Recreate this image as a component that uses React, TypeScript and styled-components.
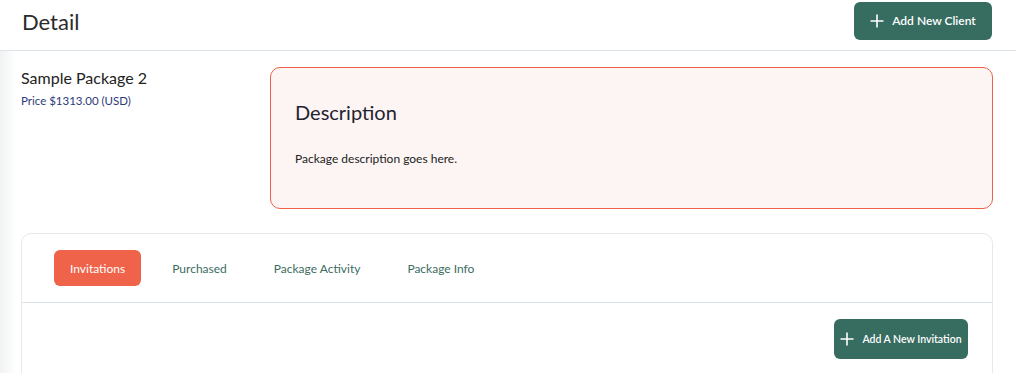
import React from "react";
import styled, {createGlobalStyle} from "styled-components";

const GlobalStyle = createGlobalStyle`
  html, body {
    margin: 0;
    padding: 0;
    background: #fff;
    font-family: Lato, "Noto Sans", "Liberation Sans", sans-serif;
  }
  * { box-sizing: border-box; }
`

const Page = styled.div`
  width: 1016px;
  height: 373px;
  overflow: hidden;
  display: flex;
  flex-direction: column;
`

const Header = styled.div`
  height: 51px;
  flex-shrink: 0;
  display: flex;
  align-items: flex-start;
  justify-content: space-between;
  padding: 2px 24px 0 22px;
  border-bottom: 1px solid #dde3ea;
`

const Title = styled.h1`
  margin: 6px 0 0;
  font-size: 22px;
  font-weight: 400;
  color: #2b2b2b;
`

const GreenButton = styled.button<{ w: number; h: number; fs: number }>`
  width: ${p => p.w}px;
  height: ${p => p.h}px;
  display: flex;
  align-items: center;
  justify-content: center;
  gap: 8px;
  border: none;
  border-radius: 6px;
  background: #376c61;
  color: #fff;
  font-family: inherit;
  font-size: ${p => p.fs}px;
  font-weight: 600;
  cursor: pointer;
  padding: 0 0 1px;
`

const Body = styled.div`
  flex: 1;
  padding: 16px 23px 0 21px;
  background: linear-gradient(to right, #f1f2f3 0px, #fff 16px);
`

const Top = styled.div`
  display: flex;
`

const PackageInfo = styled.div`
  width: 249px;
  flex-shrink: 0;
`

const PackageName = styled.div`
  font-size: 16px;
  color: #222;
  line-height: 22px;
`

const Price = styled.div`
  margin-top: 5px;
  font-size: 11.5px;
  color: #2d3a78;
`

const DescCard = styled.div`
  flex: 1;
  height: 142px;
  border: 1px solid #ef6149;
  border-radius: 10px;
  background: #fdf5f4;
  padding: 32px 24px 0;
`

const DescTitle = styled.h2`
  margin: 0;
  font-size: 20px;
  font-weight: 400;
  color: #1f2330;
`

const DescText = styled.p`
  margin: 27px 0 0;
  font-size: 12px;
  color: #222;
`

const TabsCard = styled.div`
  margin-top: 24px;
  border: 1px solid #e6e8ea;
  border-radius: 10px;
  height: 200px;
`

const TabRow = styled.div`
  height: 69px;
  display: flex;
  align-items: flex-start;
  gap: 15px;
  padding: 16px 0 0 32px;
  border-bottom: 1px solid #dde3ea;
`

const Tab = styled.div<{ active?: boolean }>`
  height: 36px;
  display: flex;
  align-items: center;
  padding: 0 16px;
  border-radius: 6px;
  font-size: 12px;
  background: ${p => (p.active ? "#ef634a" : "transparent")};
  color: ${p => (p.active ? "#fff" : "#3c6c62")};
`

const Actions = styled.div`
  display: flex;
  justify-content: flex-end;
  padding: 16px 24px 0 0;
`

const Plus = () => (
  <svg width="14" height="14" viewBox="0 0 14 14">
    <path d="M7 0.5v13M0.5 7h13" stroke="#fff" strokeWidth="1.6"/>
  </svg>
)

const tabs = ["Invitations", "Purchased", "Package Activity", "Package Info"]

export default function App() {
  const [active, setActive] = React.useState(0)
  return <Page>
    <GlobalStyle/>
    <Header>
      <Title>Detail</Title>
      <GreenButton w={138} h={38} fs={12}><Plus/>Add New Client</GreenButton>
    </Header>
    <Body>
      <Top>
        <PackageInfo>
          <PackageName>Sample Package 2</PackageName>
          <Price>Price $1313.00 (USD)</Price>
        </PackageInfo>
        <DescCard>
          <DescTitle>Description</DescTitle>
          <DescText>Package description goes here.</DescText>
        </DescCard>
      </Top>
      <TabsCard>
        <TabRow>
          {tabs.map((t, i) =>
            <Tab key={t} active={i === active} onClick={() => setActive(i)}>{t}</Tab>)}
        </TabRow>
        <Actions>
          <GreenButton w={134} h={40} fs={10.5}><Plus/>Add A New Invitation</GreenButton>
        </Actions>
      </TabsCard>
    </Body>
  </Page>
}
